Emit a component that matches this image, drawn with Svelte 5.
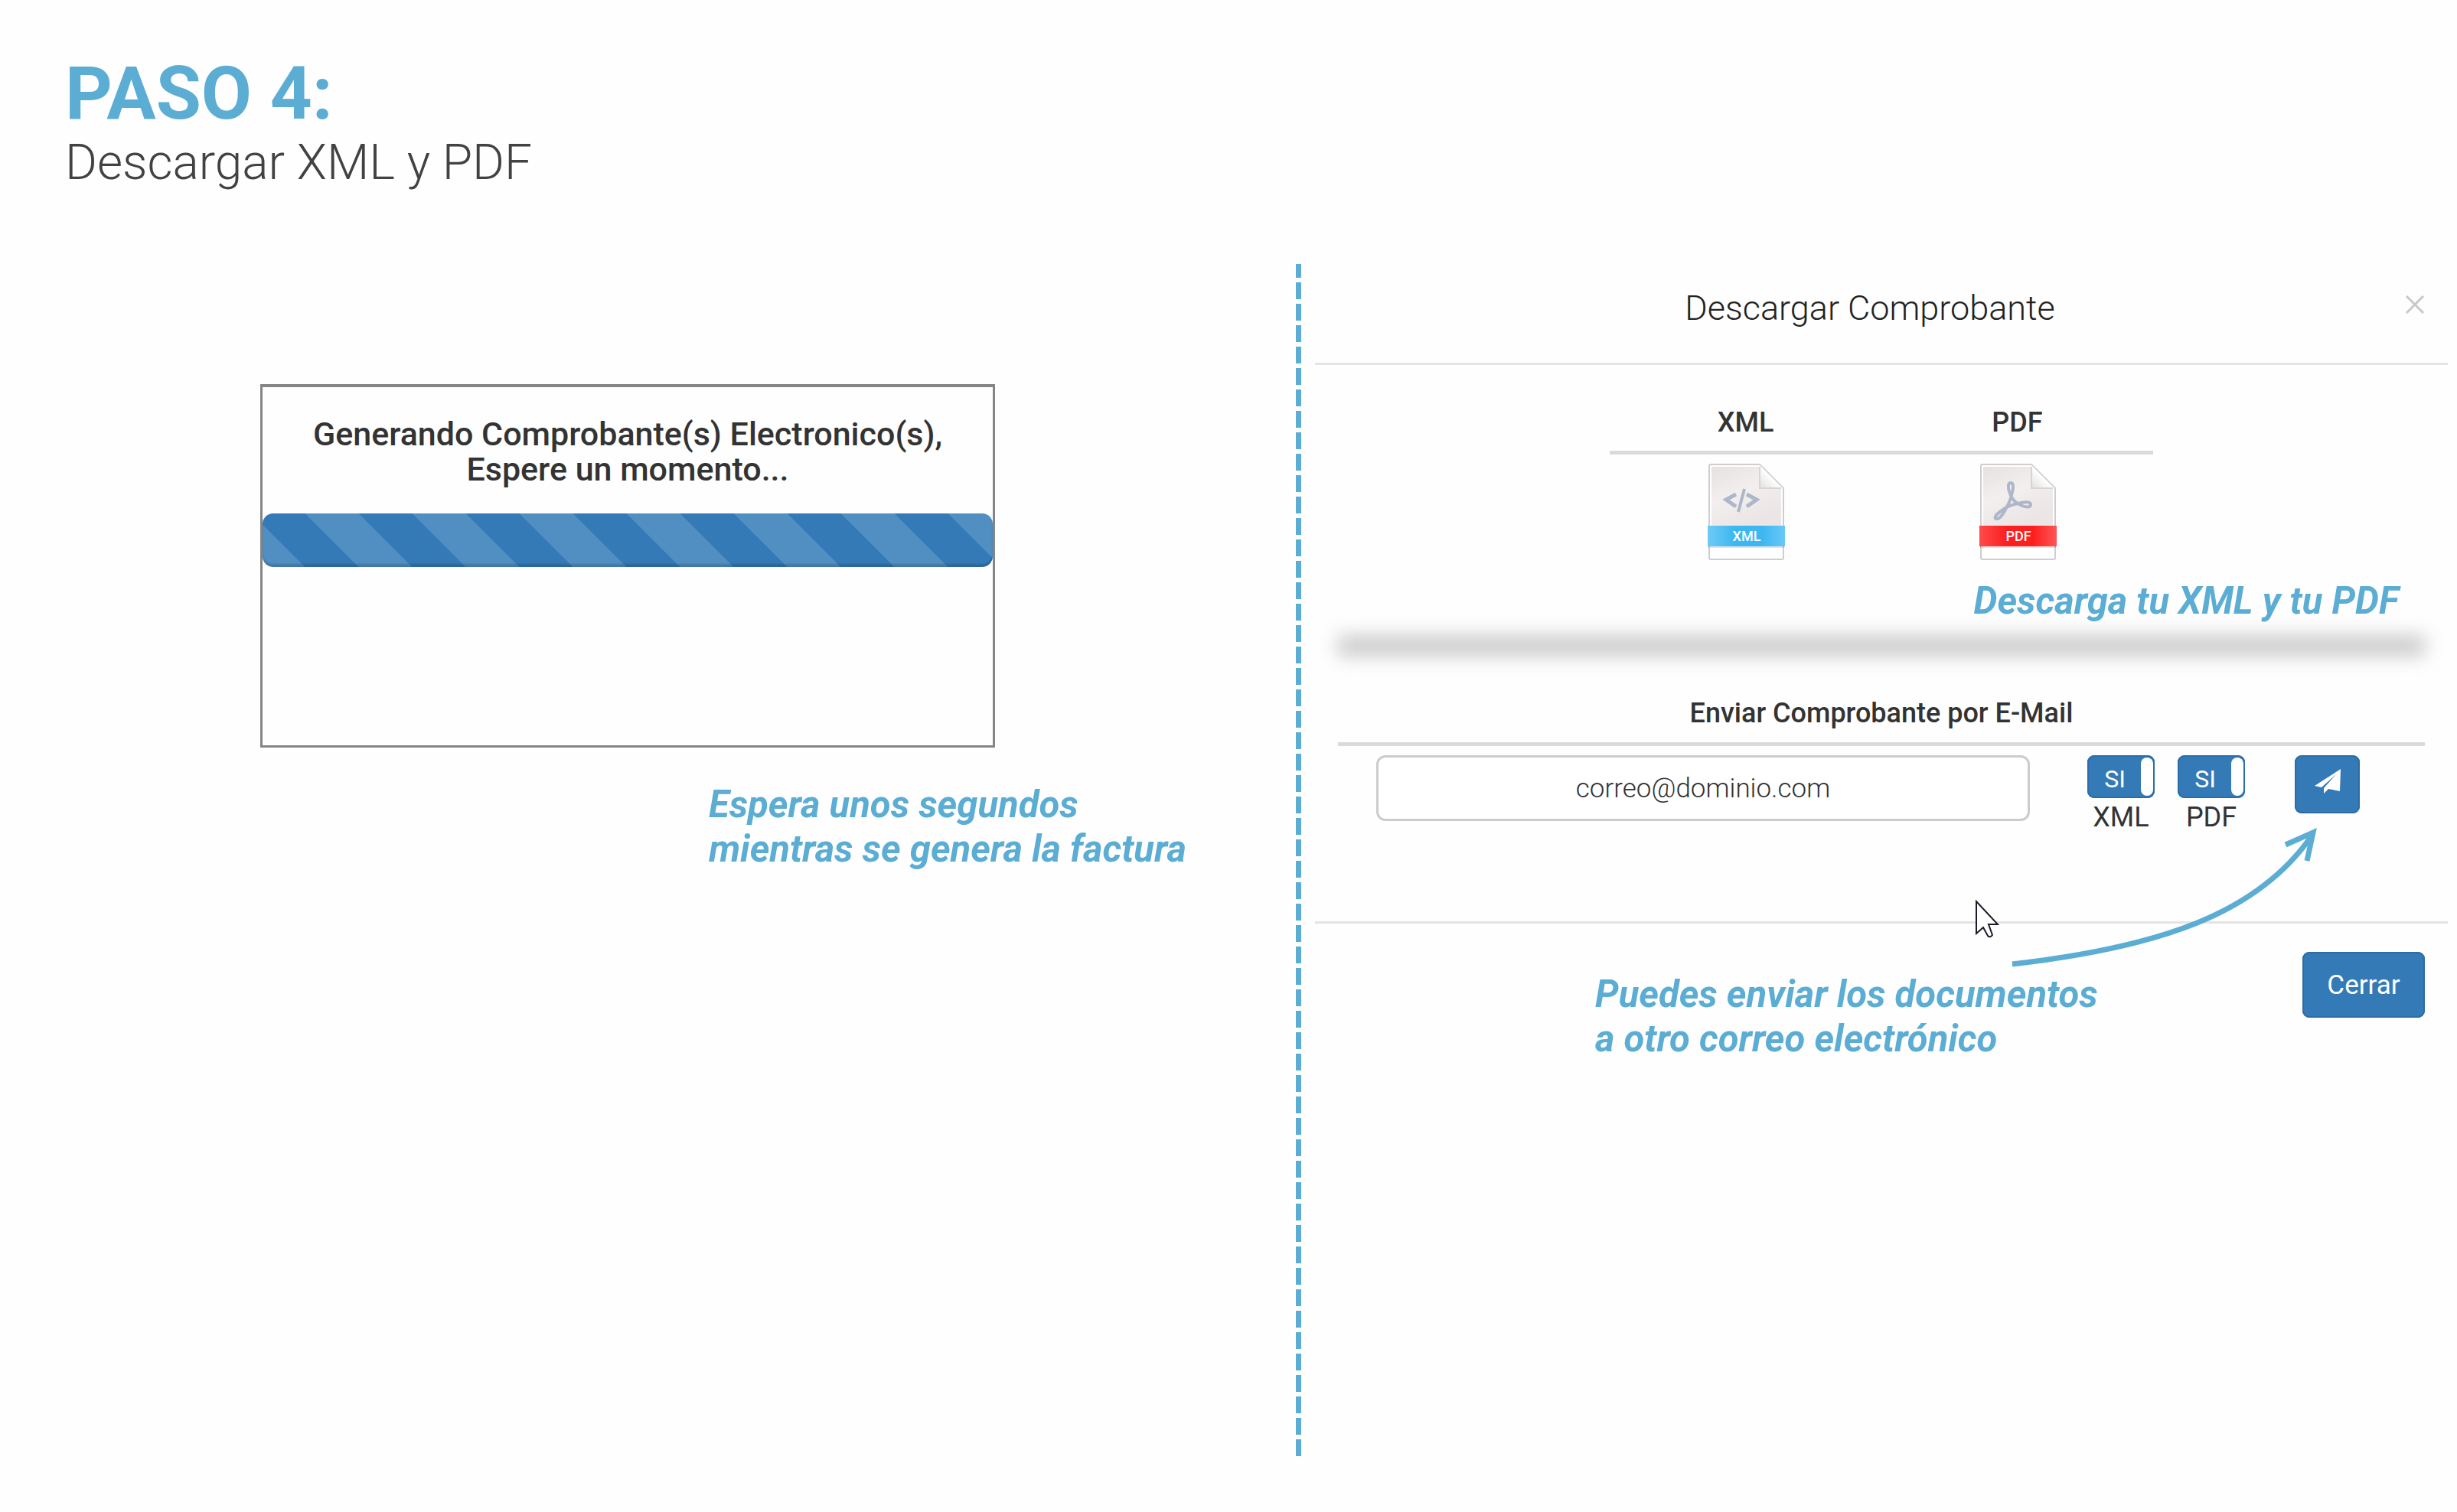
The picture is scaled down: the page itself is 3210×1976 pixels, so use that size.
<script>
  let email = $state('');
  let sendXml = $state(true);
  let sendPdf = $state(true);
</script>

{#snippet sheet(id, kind)}
  <svg class="file-icon" viewBox="0 0 102 128" aria-hidden="true">
    <defs>
      <linearGradient id="{id}-paper" x1="0" y1="0" x2="0.5" y2="1">
        <stop offset="0" stop-color="#e6e1e1" />
        <stop offset="0.5" stop-color="#f3efef" />
        <stop offset="1" stop-color="#ebe5e5" />
      </linearGradient>
      <linearGradient id="{id}-fold" x1="0" y1="1" x2="1" y2="0">
        <stop offset="0" stop-color="#e2dede" />
        <stop offset="0.5" stop-color="#ffffff" />
      </linearGradient>
      <linearGradient id="{id}-band" x1="0" y1="0" x2="1" y2="0">
        <stop offset="0" stop-color={kind === 'XML' ? '#6fcaf6' : '#ff4a4a'} />
        <stop offset="0.35" stop-color={kind === 'XML' ? '#3cb7f0' : '#fc1f1f'} />
        <stop offset="0.7" stop-color={kind === 'XML' ? '#3cb7f0' : '#fc1f1f'} />
        <stop offset="1" stop-color={kind === 'XML' ? '#69c8f7' : '#ff5656'} />
      </linearGradient>
    </defs>
    <path d="M4 2H68L99 33V124a2 2 0 0 1-2 2H4a2 2 0 0 1-2-2V4a2 2 0 0 1 2-2Z" fill="#fff" stroke="#cfcdcd" stroke-width="2" />
    <path d="M5 5H67L96 34V82H5Z" fill="url(#{id}-paper)" />
    <path d="M68 3L98 33H68Z" fill="url(#{id}-fold)" />
    <path d="M68 5V33H96" fill="none" stroke="#d8d4d4" stroke-width="2" />
    {#if kind === 'XML'}
      <g fill="none" stroke="#adb7c9" stroke-width="5">
        <path d="M37 41L24 48L37 57" />
        <path d="M51 41L64 48L51 57" />
        <path d="M48 34L40 64" stroke-width="4" />
      </g>
    {:else}
      <g fill="none" stroke="#adb7c9" stroke-width="4" stroke-linejoin="round">
        <path d="M41 26C37 26 37 33 40 40C42 47 48 53 56 56C63 59 68 57 67 54C66 50 58 51 50 53C40 55 34 58 28 63C21 68 19 72 22 73C26 74 31 67 35 59C39 52 42 44 43 38C45 30 44 26 41 26Z" />
      </g>
    {/if}
    <path d="M0 107L2 111V107ZM101 107L99 111V107Z" fill="#8a8a8a" />
    <rect x="0" y="82" width="101" height="27" fill="url(#{id}-band)" />
    <path d="M1 110H100" stroke="#8f8f8f" stroke-opacity="0.5" stroke-width="1" />
    <text x="51" y="102" text-anchor="middle" fill="#fff" font-size="18" font-weight="500">{kind}</text>
  </svg>
{/snippet}

<div class="page">
  <header class="intro">
    <h1>PASO 4:</h1>
    <p>Descargar XML y PDF</p>
  </header>

  <main class="steps">
    <section class="generating">
      <div class="loading" role="status">
        <p>Generando Comprobante(s) Electronico(s),<br />Espere un momento...</p>
        <div class="progress"></div>
      </div>
      <p class="note wait-note">Espera unos segundos<br />mientras se genera la factura</p>
    </section>

    <div class="divider"></div>

    <section class="download">
      <div class="dialog-head">
        <h2>Descargar Comprobante</h2>
        <button class="close" type="button" aria-label="Close">
          <svg viewBox="0 0 26 24" aria-hidden="true"><path d="M2 1L24 23M24 1L2 23" /></svg>
        </button>
      </div>

      <div class="dialog-body">
        <table class="files">
          <thead>
            <tr><th>XML</th><th>PDF</th></tr>
          </thead>
          <tbody>
            <tr>
              <td><button class="file" type="button" aria-label="Descargar XML">{@render sheet('xml', 'XML')}</button></td>
              <td><button class="file" type="button" aria-label="Descargar PDF">{@render sheet('pdf', 'PDF')}</button></td>
            </tr>
          </tbody>
        </table>
        <p class="note download-note">Descarga tu XML y tu PDF</p>
        <div class="shade"></div>

        <h3>Enviar Comprobante por E-Mail</h3>
        <form class="mail" onsubmit={(e) => e.preventDefault()}>
          <input class="address" type="email" aria-label="E-Mail" placeholder="correo@dominio.com" bind:value={email} />
          <div class="switches">
            <label class="switch">
              <input type="checkbox" bind:checked={sendXml} />
              <span class="track"><span class="state">{sendXml ? 'SI' : 'NO'}</span></span>
              <span>XML</span>
            </label>
            <label class="switch">
              <input type="checkbox" bind:checked={sendPdf} />
              <span class="track"><span class="state">{sendPdf ? 'SI' : 'NO'}</span></span>
              <span>PDF</span>
            </label>
          </div>
          <button class="send" type="submit" aria-label="Enviar">
            <svg viewBox="0 0 34 32" aria-hidden="true">
              <path d="M34 0L0 22L9 24L28 7L12 25V32L18 26L33 29Z" fill="#fff" />
            </svg>
          </button>
        </form>
      </div>

      <div class="dialog-foot">
        <p class="note send-note">Puedes enviar los documentos<br />a otro correo electrónico</p>
        <button class="dismiss" type="button">Cerrar</button>
      </div>

      <svg class="overlay pointer" viewBox="0 0 32 50" aria-hidden="true">
        <path d="M2 2V44L11 36L17 47Q20 50 23 46L18 32H30Z" fill="#fff" stroke="#1c1a28" stroke-width="2" />
      </svg>
      <svg class="overlay arrow" viewBox="0 0 402 190" aria-hidden="true">
        <path d="M1 181C192 159 322 116 393 12" />
        <path d="M358 25L394 9L386 46" />
      </svg>
    </section>
  </main>
</div>

<style>
  :global(body) {
    background: #fefefe;
  }

  .page {
    --sky: #5badd3;
    --blue: #337ab7;
    box-sizing: border-box;
    min-height: 100vh;
    padding-bottom: 73px;
    display: flex;
    flex-direction: column;
    font-family: Roboto, "Liberation Sans", sans-serif;
    color: #333;
    overflow: hidden;
  }

  h1, h2, h3, p {
    margin: 0;
  }

  button, input {
    font: inherit;
  }

  button {
    border: 0;
    padding: 0;
    cursor: pointer;
  }

  .intro {
    padding: 72px 85px 0;
    height: 273px;
    box-sizing: border-box;
  }

  h1 {
    color: var(--sky);
    font-size: 96px;
    line-height: 100px;
    font-weight: 700;
  }

  .intro p {
    color: #424242;
    font-size: 64px;
    line-height: 82px;
    font-weight: 300;
  }

  .steps {
    flex: 1;
    margin-top: 72px;
    display: grid;
    grid-template-columns: 1693fr 7px 1510fr;
  }

  .generating {
    display: flex;
    flex-direction: column;
    align-items: center;
    padding: 157px 53px 0 0;
  }

  .loading {
    box-sizing: border-box;
    width: 960px;
    max-width: 100%;
    min-height: 475px;
    padding-top: 38px;
    border: 3px solid #858585;
    border-top-width: 4px;
    text-align: center;
  }

  .loading p {
    font-size: 43px;
    line-height: 46px;
    font-weight: 500;
  }

  .progress {
    height: 70px;
    margin-top: 35px;
    border-radius: 14px;
    background: linear-gradient(45deg, #ffffff26 25%, transparent 25%, transparent 50%, #ffffff26 50%, #ffffff26 75%, transparent 75%) 55px 0 / 140px 140px var(--blue);
    box-shadow: inset 0 -4px 2px #00000026;
  }

  .note {
    color: var(--sky);
    font-size: 49px;
    line-height: 58px;
    font-weight: 700;
    font-style: italic;
  }

  .wait-note {
    align-self: flex-end;
    margin-top: 46px;
    padding-right: 90px;
  }

  .divider {
    background: repeating-linear-gradient(var(--sky) 0 18px, transparent 18px 24px, var(--sky) 24px 28px);
  }

  .download {
    position: relative;
    padding: 0 12px 0 18px;
  }

  .dialog-head {
    display: grid;
    grid-template-columns: 60px 1fr 60px;
    align-items: center;
    height: 132px;
    padding: 0 30px 14px 0;
    border-bottom: 3px solid #e4e4e4;
    box-sizing: border-box;
    text-align: center;
  }

  h2 {
    grid-column: 2;
    font-size: 45px;
    line-height: 50px;
    font-weight: 300;
    color: #222;
  }

  .close {
    justify-self: end;
    padding-bottom: 10px;
    background: none;
    line-height: 0;
  }

  .close svg {
    width: 26px;
    height: 24px;
    fill: none;
    stroke: #c8c8c8;
    stroke-width: 3;
  }

  .dialog-body {
    padding: 0 30px;
  }

  .files {
    width: 710px;
    margin: 54px auto 0;
    table-layout: fixed;
    border-collapse: collapse;
  }

  th {
    height: 58px;
    padding: 0;
    vertical-align: top;
    border-bottom: 5px solid #dadada;
    font-size: 36px;
    line-height: 42px;
    font-weight: 500;
  }

  td {
    padding: 11px 0 0 3px;
    text-align: center;
    line-height: 0;
  }

  .file {
    background: none;
  }

  .file-icon {
    width: 102px;
    height: 128px;
  }

  .download-note {
    margin-top: 24px;
    padding-right: 34px;
    text-align: right;
  }

  .shade {
    height: 26px;
    margin-top: 16px;
    background: #c8c8c8;
    filter: blur(12px);
  }

  h3 {
    margin-top: 54px;
    padding-bottom: 17px;
    border-bottom: 5px solid #dadada;
    font-size: 36px;
    line-height: 42px;
    font-weight: 500;
    text-align: center;
  }

  .mail {
    display: flex;
    align-items: flex-start;
    padding: 12px 85px 0 50px;
    min-height: 217px;
    font-size: 36px;
  }

  .address {
    box-sizing: border-box;
    flex: 1;
    min-width: 0;
    height: 86px;
    border: 3px solid #ccc;
    border-radius: 12px;
    background: #fff;
    text-align: center;
    font-size: 35px;
    font-weight: 300;
    color: #333;
  }

  .address::placeholder {
    color: #333;
    opacity: 1;
  }

  .switches {
    display: flex;
    gap: 30px;
    margin: 0 65px 0 75px;
  }

  .switch {
    position: relative;
    display: flex;
    flex-direction: column;
    align-items: center;
    line-height: 42px;
  }

  .switch input {
    position: absolute;
    inset: 0;
    margin: 0;
    opacity: 0;
  }

  .track {
    box-sizing: border-box;
    display: flex;
    width: 88px;
    height: 56px;
    margin-bottom: 4px;
    padding: 3px 2px;
    border-radius: 9px;
    background: var(--blue);
    box-shadow: inset 0 0 0 2px #2a6daa;
    color: #fff;
  }

  .track::after {
    content: "";
    width: 16px;
    border-radius: 8px;
    background: #fff;
  }

  .state {
    flex: 1;
    font-size: 32px;
    line-height: 56px;
    text-align: center;
  }

  .send, .dismiss {
    background: var(--blue);
    border-radius: 9px;
    box-shadow: inset 0 0 0 2px #2e6da4;
    color: #fff;
  }

  .send {
    width: 85px;
    height: 76px;
  }

  .send svg {
    width: 34px;
    height: 32px;
  }

  .dialog-foot {
    display: flex;
    justify-content: space-between;
    align-items: flex-start;
    padding: 37px 30px 0 366px;
    border-top: 3px solid #e4e4e4;
  }

  .send-note {
    margin-top: 27px;
  }

  .dismiss {
    width: 160px;
    height: 86px;
    font-size: 35px;
  }

  .overlay {
    position: absolute;
    pointer-events: none;
  }

  .pointer {
    width: 32px;
    height: 50px;
    right: 598px;
    top: 831px;
  }

  .arrow {
    width: 402px;
    height: 190px;
    right: 180px;
    top: 734px;
    fill: none;
    stroke: var(--sky);
    stroke-width: 7;
  }
</style>
